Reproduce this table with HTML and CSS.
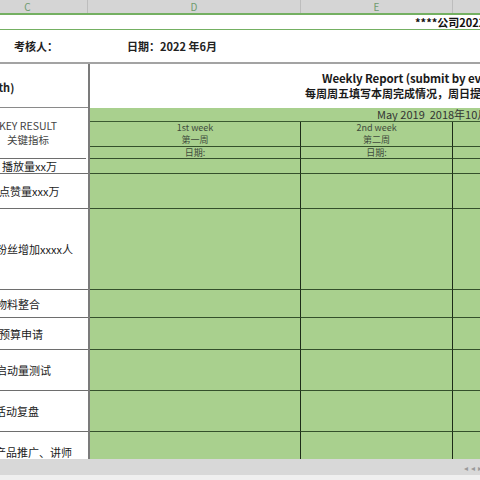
FILE: index.html
```html
<!DOCTYPE html>
<html>
<head>
<meta charset="utf-8">
<link rel="stylesheet" href="styles.css">
</head>
<body>
<div class="screen">
  <div class="colhdr">
    <div class="ch ch-c">C</div>
    <div class="ch ch-d">D</div>
    <div class="ch ch-e">E</div>
    <div class="ch ch-f"></div>
  </div>
  <div class="line-green2"></div>
  <div class="row-title"><span class="title">****公司2022年6月员工周报</span></div>
  <div class="line-green1"></div>
  <div class="row-meta">
    <span class="meta-a">考核人：</span>
    <span class="meta-b">日期：2022 年6月</span>
  </div>
  <div class="line-gray2"></div>
  <div class="sheet">
    <div class="c-left head"><span class="clip">(Month)</span></div>
    <div class="divider"></div>
    <div class="c-wide head-right">
      <div class="wr-en">Weekly Report (submit by every Friday)</div>
      <div class="wr-cn">每周周五填写本周完成情况，周日提交</div>
    </div>

    <div class="c-left kr"><div>KEY RESULT</div><div>关键指标</div></div>
    <div class="g-wide month"><span>May 2019&nbsp;&nbsp;2018年10月</span></div>

    <div class="g wk"><div>1st week</div><div>第一周</div></div>
    <div class="g wk"><div>2nd week</div><div>第二周</div></div>
    <div class="g wk last"></div>

    <div class="g dt">日期:</div>
    <div class="g dt">日期:</div>
    <div class="g dt last"></div>

    <div class="c-left item r5"><span class="t0">播放量xx万</span></div>
    <div class="g"></div><div class="g"></div><div class="g last"></div>

    <div class="c-left item r6"><span class="t1">点赞量xxx万</span></div>
    <div class="g"></div><div class="g"></div><div class="g last"></div>

    <div class="c-left item r7"><span class="t2">粉丝增加xxxx人</span></div>
    <div class="g"></div><div class="g"></div><div class="g last"></div>

    <div class="c-left item r8"><span class="t2">物料整合</span></div>
    <div class="g"></div><div class="g"></div><div class="g last"></div>

    <div class="c-left item r9"><span class="t1">预算申请</span></div>
    <div class="g"></div><div class="g"></div><div class="g last"></div>

    <div class="c-left item r10"><span class="t2">启动量测试</span></div>
    <div class="g"></div><div class="g"></div><div class="g last"></div>

    <div class="c-left item r11"><span class="t3">活动复盘</span></div>
    <div class="g"></div><div class="g"></div><div class="g last"></div>

    <div class="c-left item r12"><span class="t3">产品推广、讲师</span></div>
    <div class="g"></div><div class="g"></div><div class="g last"></div>
  </div>
  <div class="hscroll">
    <div class="arrows"><span>◂</span><span>◂</span><span>▸</span></div>
  </div>
  <div class="status"></div>
</div>
</body>
</html>
```
FILE: styles.css
```css
* { box-sizing: border-box; }
html, body { margin: 0; padding: 0; background: #fff; }
body {
  font-family: "Noto Sans CJK SC", "Noto Sans", sans-serif;
  color: #222;
  width: 480px;
  height: 480px;
  overflow: hidden;
}
.screen { width: 480px; height: 480px; overflow: hidden; display: flex; flex-direction: column; }

.colhdr {
  height: 13px;
  background: #d5d5d5;
  display: flex;
  flex-shrink: 0;
  font-size: 10px;
  line-height: 13px;
  color: #6f9c6f;
  overflow: hidden;
}
.ch { text-align: center; border-right: 1px solid #bdbdbd; flex-shrink: 0; }
.ch-c { width: 120px; margin-left: -32px; }
.ch-d { width: 213px; }
.ch-e { width: 152px; }
.ch-f { flex: 1; border-right: 0; }

.line-green2 { height: 2px; background: #74b062; flex-shrink: 0; }
.line-green1 { height: 1px; background: #74b062; flex-shrink: 0; }
.line-gray2 { height: 2px; background: #a3a3a3; flex-shrink: 0; }

.row-title {
  height: 14px;
  flex-shrink: 0;
  overflow: hidden;
  white-space: nowrap;
  font-size: 11px;
  font-weight: 700;
  line-height: 14px;
  padding-left: 415px;
  color: #111;
}
.row-meta {
  height: 32px;
  flex-shrink: 0;
  display: flex;
  align-items: center;
  font-size: 11px;
  font-weight: 700;
  color: #222;
  white-space: nowrap;
}
.meta-a { margin-left: 14px; }
.meta-b { margin-left: 69px; }

.sheet {
  height: 395px;
  flex-shrink: 0;
  overflow: hidden;
  display: grid;
  grid-template-columns: 88px 2px 211px 152px 152px;
  grid-template-rows: 44px 14px 25px 12px 15px 35px 81px 28px 32px 41px 41px 40px;
  font-size: 11px;
}
.c-left {
  grid-column: 1;
  border-bottom: 1px solid #6e6e6e;
  background: #fff;
  overflow: hidden;
  white-space: nowrap;
  display: flex;
  align-items: center;
}
.divider { grid-column: 2; grid-row: 1 / -1; background: #7b7b7b; }
.head { grid-row: 1; border-bottom-color: #8a8a8a; font-weight: 700; padding-top: 2px; }
.head .clip { margin-left: -29px; }
.head-right {
  grid-column: 3 / 6;
  grid-row: 1;
  overflow: hidden;
  white-space: nowrap;
  font-weight: 700;
  color: #1a1a1a;
  padding-top: 7px;
}
.wr-en { margin-left: 232px; font-size: 11.5px; line-height: 15px; letter-spacing: -0.1px; }
.wr-cn { margin-left: 215px; font-size: 11px; line-height: 14px; }

.kr {
  grid-row: 2 / 5;
  flex-direction: column;
  justify-content: center;
  align-items: center;
  width: 116px;
  margin-left: -30px;
  color: #444;
  font-weight: 400;
  line-height: 14px;
  font-size: 10.5px;
  padding-top: 0;
}

.g-wide, .g {
  background: #a9d08e;
}
.month {
  grid-column: 3 / 6;
  grid-row: 2;
  border-bottom: 1px solid #3b5a31;
  overflow: hidden;
  white-space: nowrap;
  color: #333;
  font-size: 11px;
  line-height: 13px;
  padding-left: 287px;
}
.g {
  border-right: 1px solid #1d2b18;
  border-bottom: 1px solid #34502b;
}
.g.last { border-right: 0; }
.wk {
  display: flex;
  flex-direction: column;
  align-items: center;
  justify-content: center;
  font-size: 9px;
  line-height: 12px;
  color: #404a3c;
}
.dt {
  font-size: 9px;
  line-height: 11px;
  text-align: center;
  color: #404a3c;
}

.item { font-size: 11px; color: #1a1a1a; }
.t0 { margin-left: 2px; }
.t1 { margin-left: -1px; }
.t2 { margin-left: -4px; }
.t3 { margin-left: -5px; }

.hscroll {
  height: 16px;
  flex-shrink: 0;
  background: #d8d8d8;
  display: flex;
  justify-content: flex-end;
  align-items: center;
  overflow: hidden;
}
.arrows { display: flex; gap: 3px; font-size: 8px; color: #9a9a9a; margin-right: -2px; }
.status { flex: 1; background: #efefef; }
```
